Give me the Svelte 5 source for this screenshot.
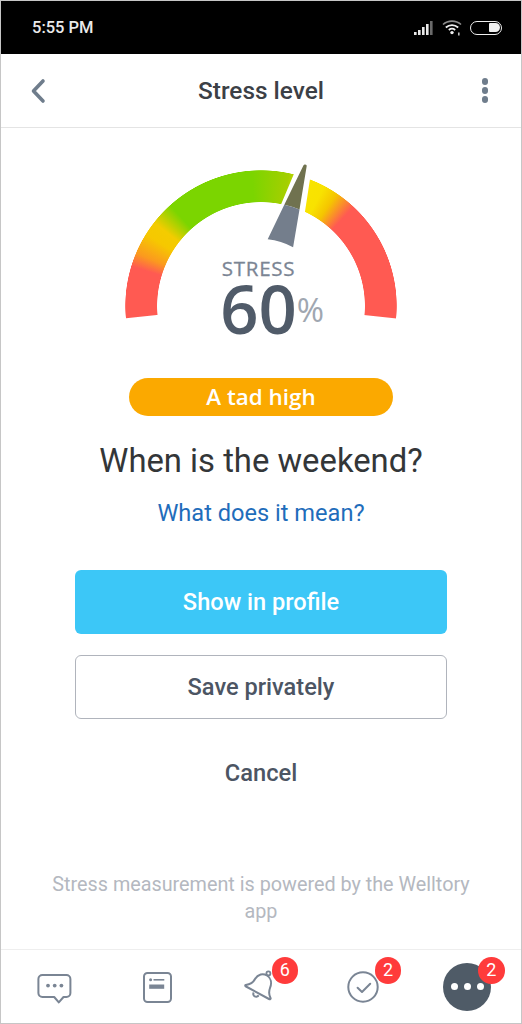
<script>
  const actions = [
    { label: 'Show in profile', kind: 'primary' },
    { label: 'Save privately', kind: 'outline' }
  ];
</script>

<div class="page">
  <div class="status">
    <span class="time">5:55 PM</span>
    <div class="status-icons">
      <svg width="20" height="16" viewBox="0 0 20 16" aria-hidden="true">
        <rect x="0" y="12" width="2.6" height="3" fill="#e8e8e8" />
        <rect x="4" y="10" width="2.6" height="5" fill="#e8e8e8" />
        <rect x="8" y="7" width="2.6" height="8" fill="#e8e8e8" />
        <rect x="12" y="4" width="2.6" height="11" fill="#e8e8e8" />
        <rect x="16" y="1" width="2.6" height="14" fill="#6a6a6a" />
      </svg>
      <svg width="21" height="17" viewBox="0 0 21 17" aria-hidden="true">
        <path d="M1 5.5 C6 1 14 1 19 5.5" fill="none" stroke="#8c8c8c" stroke-width="1.6" />
        <path d="M3.8 8.5 C7.5 5.2 12.5 5.2 16.2 8.5" fill="none" stroke="#f0f0f0" stroke-width="1.7" />
        <path d="M6.8 11 C8.8 9.4 11.2 9.4 13.2 11" fill="none" stroke="#f0f0f0" stroke-width="1.7" />
        <circle cx="10" cy="13.6" r="1.7" fill="#f0f0f0" />
        <rect x="16" y="13.5" width="1.6" height="3" fill="#bdbdbd" />
      </svg>
      <div class="battery"><div class="battery-fill"></div></div>
    </div>
  </div>

  <header class="header">
    <svg class="back" width="16" height="26" viewBox="0 0 16 26" aria-hidden="true">
      <path d="M13 3 L3.5 13 L13 23" fill="none" stroke="#6f7d8c" stroke-width="3.6" stroke-linecap="round" stroke-linejoin="round" />
    </svg>
    <h1>Stress level</h1>
    <div class="kebab"><i></i><i></i><i></i></div>
  </header>

  <main class="main">
    <div class="gauge">
      <div class="arc"></div>
      <svg class="needle" width="300" height="200" viewBox="110 150 300 200" aria-hidden="true">
        <path d="M303.4 165.4 Q303.8 164.6 305 164.6 L306 164.8 Q306.8 165 306.7 166 L299.5 209.5 A104 104 0 0 0 284.3 204.8 Z" fill="#70724f" />
        <path d="M284.3 204.8 A104 104 0 0 1 299.5 209.5 L293.1 247.3 A67 67 0 0 0 267.7 239.3 Z" fill="#747e8c" />
      </svg>
      <div class="readout">
        <div class="caption">STRESS</div>
        <div class="value">60<span class="percent">%</span></div>
      </div>
    </div>

    <div class="pill">A tad high</div>
    <h2 class="headline">When is the weekend?</h2>
    <div class="link">What does it mean?</div>

    <div class="actions">
      {#each actions as action}
        <button class="btn {action.kind}">{action.label}</button>
      {/each}
    </div>
    <div class="cancel">Cancel</div>
    <p class="powered">Stress measurement is powered by the Welltory app</p>
  </main>

  <nav class="nav">
    <div class="slot">
      <svg width="52" height="52" viewBox="0 0 52 52" aria-hidden="true">
        <path d="M13.4 14 H37.4 a4 4 0 0 1 4 4 V32 a4 4 0 0 1 -4 4 H34.5 L29.8 41.4 L25.2 36 H13.4 a4 4 0 0 1 -4 -4 V18 a4 4 0 0 1 4 -4 Z" fill="none" stroke="#7a8594" stroke-width="2" stroke-linejoin="round" />
        <circle cx="19" cy="24.6" r="1.9" fill="#7a8594" />
        <circle cx="25.7" cy="24.6" r="1.9" fill="#7a8594" />
        <circle cx="32.4" cy="24.6" r="1.9" fill="#7a8594" />
      </svg>
    </div>
    <div class="slot">
      <svg width="52" height="52" viewBox="0 0 52 52" aria-hidden="true">
        <rect x="12" y="12" width="27" height="29" rx="3.5" fill="none" stroke="#7a8594" stroke-width="2" />
        <circle cx="18.6" cy="18.8" r="1.5" fill="#7a8594" />
        <rect x="21.5" y="18" width="10.8" height="1.6" fill="#7a8594" />
        <rect x="17.2" y="23.5" width="15" height="4.3" fill="#7a8594" />
      </svg>
    </div>
    <div class="slot">
      <svg width="52" height="52" viewBox="0 0 52 52" aria-hidden="true">
        <path d="M10.7 24 C15 23.5 18 22 20 18 C23 13 28 12 32 14.5 C36 17 37 22 35 27 C33.5 31 34 34 35.5 37 C36 38 35 38.5 34 38 L11 25.5 C10 25 10 24.2 10.7 24 Z" fill="none" stroke="#7a8594" stroke-width="2" stroke-linejoin="round" />
        <circle cx="33.4" cy="12.4" r="2" fill="none" stroke="#7a8594" stroke-width="1.8" />
        <path d="M18.7 31.5 A2.8 2.8 0 1 0 23.6 34.2" fill="none" stroke="#7a8594" stroke-width="2" />
      </svg>
      <span class="badge">6</span>
    </div>
    <div class="slot">
      <svg width="52" height="52" viewBox="0 0 52 52" aria-hidden="true">
        <circle cx="25" cy="26" r="14.7" fill="none" stroke="#7a8594" stroke-width="2" />
        <path d="M19.6 26.8 L24 31 L32.2 22.8" fill="none" stroke="#7a8594" stroke-width="2" stroke-linecap="round" stroke-linejoin="round" />
      </svg>
      <span class="badge">2</span>
    </div>
    <div class="slot">
      <div class="more"><i></i><i></i><i></i></div>
      <span class="badge">2</span>
    </div>
  </nav>
</div>

<style>
  :global(body) {
    margin: 0;
    background: #fff;
  }
  .page {
    box-sizing: border-box;
    width: 522px;
    height: 1024px;
    border: 1px solid #c6c6c6;
    display: flex;
    flex-direction: column;
    font-family: Roboto, "Liberation Sans", sans-serif;
    background: #fff;
    overflow: hidden;
  }
  .status {
    flex: none;
    height: 53px;
    background: #000;
    display: flex;
    align-items: center;
    justify-content: space-between;
    padding: 0 19px 0 31px;
  }
  .time {
    color: #eaeaea;
    font-size: 16.5px;
    font-weight: 500;
  }
  .status-icons {
    display: flex;
    align-items: center;
    gap: 7.5px;
  }
  .battery {
    box-sizing: border-box;
    width: 32px;
    height: 14px;
    border: 1.6px solid #f0f0f0;
    border-radius: 7px;
    display: flex;
    justify-content: flex-end;
    padding: 1.4px;
  }
  .battery-fill {
    width: 11px;
    background: #f0f0f0;
    border-radius: 1px 5px 5px 1px;
  }
  .header {
    flex: none;
    height: 74px;
    box-sizing: border-box;
    border-bottom: 1px solid #e4e4e4;
    display: grid;
    grid-template-columns: 1fr auto 1fr;
    align-items: center;
    padding: 0 29px;
  }
  .back {
    display: block;
  }
  .header h1 {
    margin: 0;
    font-size: 24.4px;
    font-weight: 500;
    color: #3c4046;
  }
  .kebab {
    display: flex;
    flex-direction: column;
    align-items: flex-end;
    gap: 2.8px;
    margin-right: 4px;
  }
  .kebab i {
    display: block;
    width: 6.4px;
    height: 6.4px;
    border-radius: 50%;
    background: #6f7d8c;
  }
  .main {
    flex: 1;
    min-height: 0;
    display: flex;
    flex-direction: column;
    align-items: center;
    padding-top: 22px;
  }
  .gauge {
    position: relative;
    width: 300px;
    height: 228px;
    flex: none;
  }
  .arc {
    position: absolute;
    left: 14px;
    top: 20px;
    width: 272px;
    height: 272px;
    background: conic-gradient(
      from 260deg,
      #ff5a52 0deg,
      #ff5a52 27deg,
      #fb9a1e 33deg,
      #f6c800 42deg,
      #f3cc00 48deg,
      #7bd500 58deg,
      #7bd500 96deg,
      #a4cf00 112deg,
      #f8e400 121deg,
      #f8e200 128deg,
      #f5c500 134deg,
      #ff5a52 143deg,
      #ff5a52 200deg
    );
    mask: radial-gradient(circle at center, transparent 103.5px, #000 104.2px, #000 135.4px, transparent 136px);
    -webkit-mask: radial-gradient(circle at center, transparent 103.5px, #000 104.2px, #000 135.4px, transparent 136px);
    clip-path: polygon(136px 134px, -25px 151px, -25px -70px, 179px -20px, 141px 70px, 175.6px 70px, 189.5px -20px, 295px -70px, 295px 151px);
  }
  .needle {
    position: absolute;
    left: -1px;
    top: 0;
    display: block;
  }
  .readout {
    position: relative;
    padding-top: 106px;
    padding-right: 5px;
    text-align: center;
    font-family: "Open Sans", "Liberation Sans", sans-serif;
  }
  .caption {
    font-size: 20.5px;
    line-height: 24px;
    letter-spacing: 0.7px;
    color: #7b8594;
    -webkit-text-stroke: 0.3px #7b8594;
  }
  .value {
    display: inline-block;
    position: relative;
    margin-top: 1px;
    font-size: 67px;
    line-height: 54px;
    font-weight: 600;
    color: #505b69;
  }
  .percent {
    position: absolute;
    left: 100%;
    bottom: 5px;
    font-size: 33px;
    line-height: 40px;
    font-weight: 400;
    color: #a0a7b1;
  }
  .pill {
    flex: none;
    width: 264px;
    height: 38px;
    border-radius: 19px;
    background: #fba900;
    color: #fff;
    font-family: "Open Sans", "Liberation Sans", sans-serif;
    font-size: 22.4px;
    font-weight: 600;
    line-height: 38px;
    text-align: center;
  }
  .headline {
    margin: 25px 0 0;
    font-size: 32.8px;
    line-height: 40px;
    font-weight: 400;
    color: #333638;
  }
  .link {
    margin-top: 16px;
    font-size: 23.6px;
    line-height: 32px;
    color: #1f6dbb;
  }
  .actions {
    margin-top: 41px;
    display: flex;
    flex-direction: column;
    gap: 21px;
  }
  .btn {
    display: block;
    box-sizing: border-box;
    width: 372px;
    height: 64px;
    border-radius: 6px;
    font-family: inherit;
    font-size: 23.6px;
    font-weight: 500;
    padding: 0;
  }
  .primary {
    background: #3cc7f7;
    border: 0;
    color: #fff;
  }
  .outline {
    background: #fff;
    border: 1px solid #b0b4bc;
    color: #4c5563;
  }
  .cancel {
    margin-top: 38px;
    font-size: 23.7px;
    line-height: 32px;
    font-weight: 500;
    color: #4c5563;
  }
  .powered {
    margin: 82px 0 0;
    width: 430px;
    font-size: 19.8px;
    line-height: 27px;
    text-align: center;
    color: #b4b8c0;
  }
  .nav {
    flex: none;
    height: 74px;
    box-sizing: border-box;
    border-top: 1px solid #eeeeee;
    display: flex;
    padding: 0 2px;
  }
  .slot {
    flex: 1;
    position: relative;
    display: flex;
    align-items: center;
    justify-content: center;
  }
  .more {
    width: 48px;
    height: 48px;
    border-radius: 50%;
    background: #4f5b67;
    display: flex;
    align-items: center;
    justify-content: center;
    gap: 6px;
  }
  .more i {
    display: block;
    width: 7px;
    height: 7px;
    border-radius: 50%;
    background: #fff;
  }
  .badge {
    position: absolute;
    left: calc(50% + 10.5px);
    top: 7px;
    width: 26.6px;
    height: 26.6px;
    border-radius: 50%;
    background: #ff3b3b;
    color: #fff;
    font-size: 18px;
    line-height: 26.6px;
    text-align: center;
  }
</style>
